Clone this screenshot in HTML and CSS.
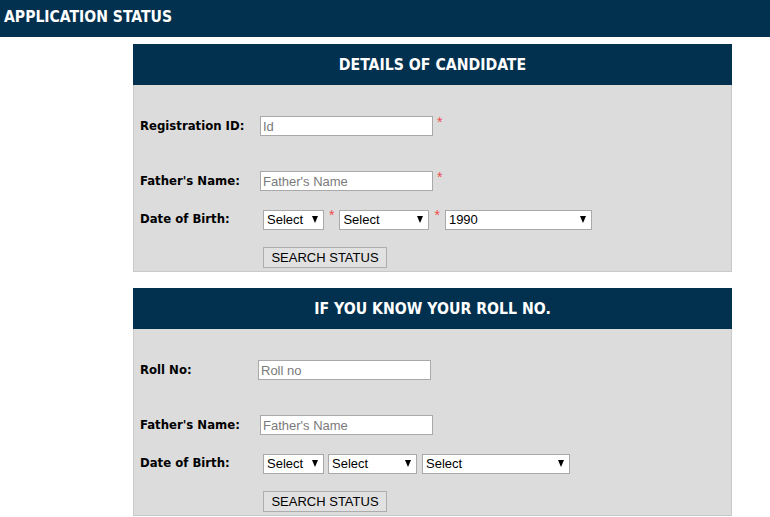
FILE: index.html
```html
<!DOCTYPE html>
<html lang="en">
<head>
<meta charset="utf-8">
<title>Application Status</title>
<link rel="stylesheet" href="styles.css">
</head>
<body>
<div class="topbar">APPLICATION STATUS</div>
<div class="main">
  <div class="panel">
    <div class="panel-head">DETAILS OF CANDIDATE</div>
    <div class="panel-body">
      <div class="row row-first">
        <label class="lbl">Registration ID:</label>
        <input class="txt" type="text" placeholder="Id"><span class="req">*</span>
      </div>
      <div class="row row-second">
        <label class="lbl">Father's Name:</label>
        <input class="txt" type="text" placeholder="Father's Name"><span class="req">*</span>
      </div>
      <div class="row row-third">
        <label class="lbl">Date of Birth:</label>
        <span class="sel sel-day"><select><option>Select</option></select></span><span class="req req-sel">*</span>
        <span class="sel sel-month"><select><option>Select</option></select></span><span class="req req-sel">*</span>
        <span class="sel sel-year"><select><option>1990</option></select></span>
      </div>
      <div class="row row-btn">
        <button class="btn" type="button">SEARCH STATUS</button>
      </div>
    </div>
  </div>
  <div class="panel">
    <div class="panel-head">IF YOU KNOW YOUR ROLL NO.</div>
    <div class="panel-body">
      <div class="row row-first">
        <label class="lbl">Roll No:</label>
        <input class="txt txt-roll" type="text" placeholder="Roll no">
      </div>
      <div class="row row-second">
        <label class="lbl">Father's Name:</label>
        <input class="txt" type="text" placeholder="Father's Name">
      </div>
      <div class="row row-third row-third-b">
        <label class="lbl">Date of Birth:</label>
        <span class="sel sel-day"><select><option>Select</option></select></span>
        <span class="sel sel-month2"><select><option>Select</option></select></span>
        <span class="sel sel-year2"><select><option>Select</option></select></span>
      </div>
      <div class="row row-btn">
        <button class="btn" type="button">SEARCH STATUS</button>
      </div>
    </div>
  </div>
</div>
</body>
</html>
```
FILE: styles.css
```css
html, body {
  margin: 0;
  padding: 0;
  background: #ffffff;
}
body {
  font-family: "DejaVu Sans Condensed", "DejaVu Sans", sans-serif;
  color: #000;
}
.topbar {
  height: 37px;
  line-height: 34px;
  background: #02314f;
  color: #ffffff;
  font-weight: bold;
  font-size: 15.6px;
  padding-left: 4px;
}
.main {
  padding-top: 7px;
  margin-left: 133px;
  width: 599px;
}
.panel {
  background: #dcdcdc;
  border: 1px solid #c9c9c9;
  box-sizing: border-box;
  margin-bottom: 16px;
}
.panel-head {
  height: 41px;
  line-height: 42px;
  margin: -1px -1px 0 -1px;
  background: #02314f;
  color: #ffffff;
  text-align: center;
  font-weight: bold;
  font-size: 15.7px;
}
.panel-body {
  padding: 31px 0 4px 6px;
}
.row {
  display: flex;
  align-items: center;
  height: 20px;
}
.row-first { margin-bottom: 35px; }
.row-second { margin-bottom: 18px; }
.row-third { margin-bottom: 18px; }
.row-third-b { margin-bottom: 18px; margin-top: 1px; }
.row-btn { padding-left: 123px; }
.lbl {
  width: 120px;
  flex: none;
  font-weight: bold;
  font-size: 13px;
  margin-top: -2px;
}
.txt {
  box-sizing: border-box;
  width: 173px;
  height: 20px;
  margin: 0;
  padding: 0 2px;
  border: 1px solid #a9a9a9;
  background: #fff;
  font-family: "Liberation Sans", Arial, sans-serif;
  font-size: 13px;
  color: #000;
  outline: none;
}
.txt::placeholder { color: #7a7a7a; }
.txt-roll { margin-left: -2px; }
.req {
  align-self: flex-start;
  color: #ec4b4b;
  font-family: "Liberation Sans", Arial, sans-serif;
  font-size: 14px;
  line-height: 14px;
  margin-left: 4px;
  margin-top: -1px;
}
.req-sel {
  margin: -1px 5px 0 5px;
}
.sel {
  position: relative;
  display: inline-block;
  height: 20px;
  flex: none;
}
.sel select {
  -webkit-appearance: none;
  appearance: none;
  box-sizing: border-box;
  width: 100%;
  height: 20px;
  margin: 0;
  padding: 0 0 0 3px;
  border: 1px solid #a9a9a9;
  border-radius: 0;
  background: #fff;
  font-family: "Liberation Sans", Arial, sans-serif;
  font-size: 13px;
  color: #000;
}
.sel::after {
  content: "";
  position: absolute;
  right: 6px;
  top: 7px;
  width: 0;
  height: 0;
  border-left: 3.5px solid transparent;
  border-right: 3.5px solid transparent;
  border-top: 7px solid #000;
  pointer-events: none;
}
.sel-day { width: 61px; margin-left: 3px; }
.sel-month { width: 90px; }
.sel-year { width: 147px; }
.sel-month2 { width: 89px; margin-left: 4px; }
.sel-year2 { width: 148px; margin-left: 5px; }
.btn {
  box-sizing: border-box;
  width: 124px;
  height: 21px;
  margin: 0;
  padding: 0;
  background: #e1e1e1;
  border: 1px solid #adadad;
  border-radius: 0;
  font-family: "Liberation Sans", Arial, sans-serif;
  font-size: 13px;
  color: #000;
}
```
